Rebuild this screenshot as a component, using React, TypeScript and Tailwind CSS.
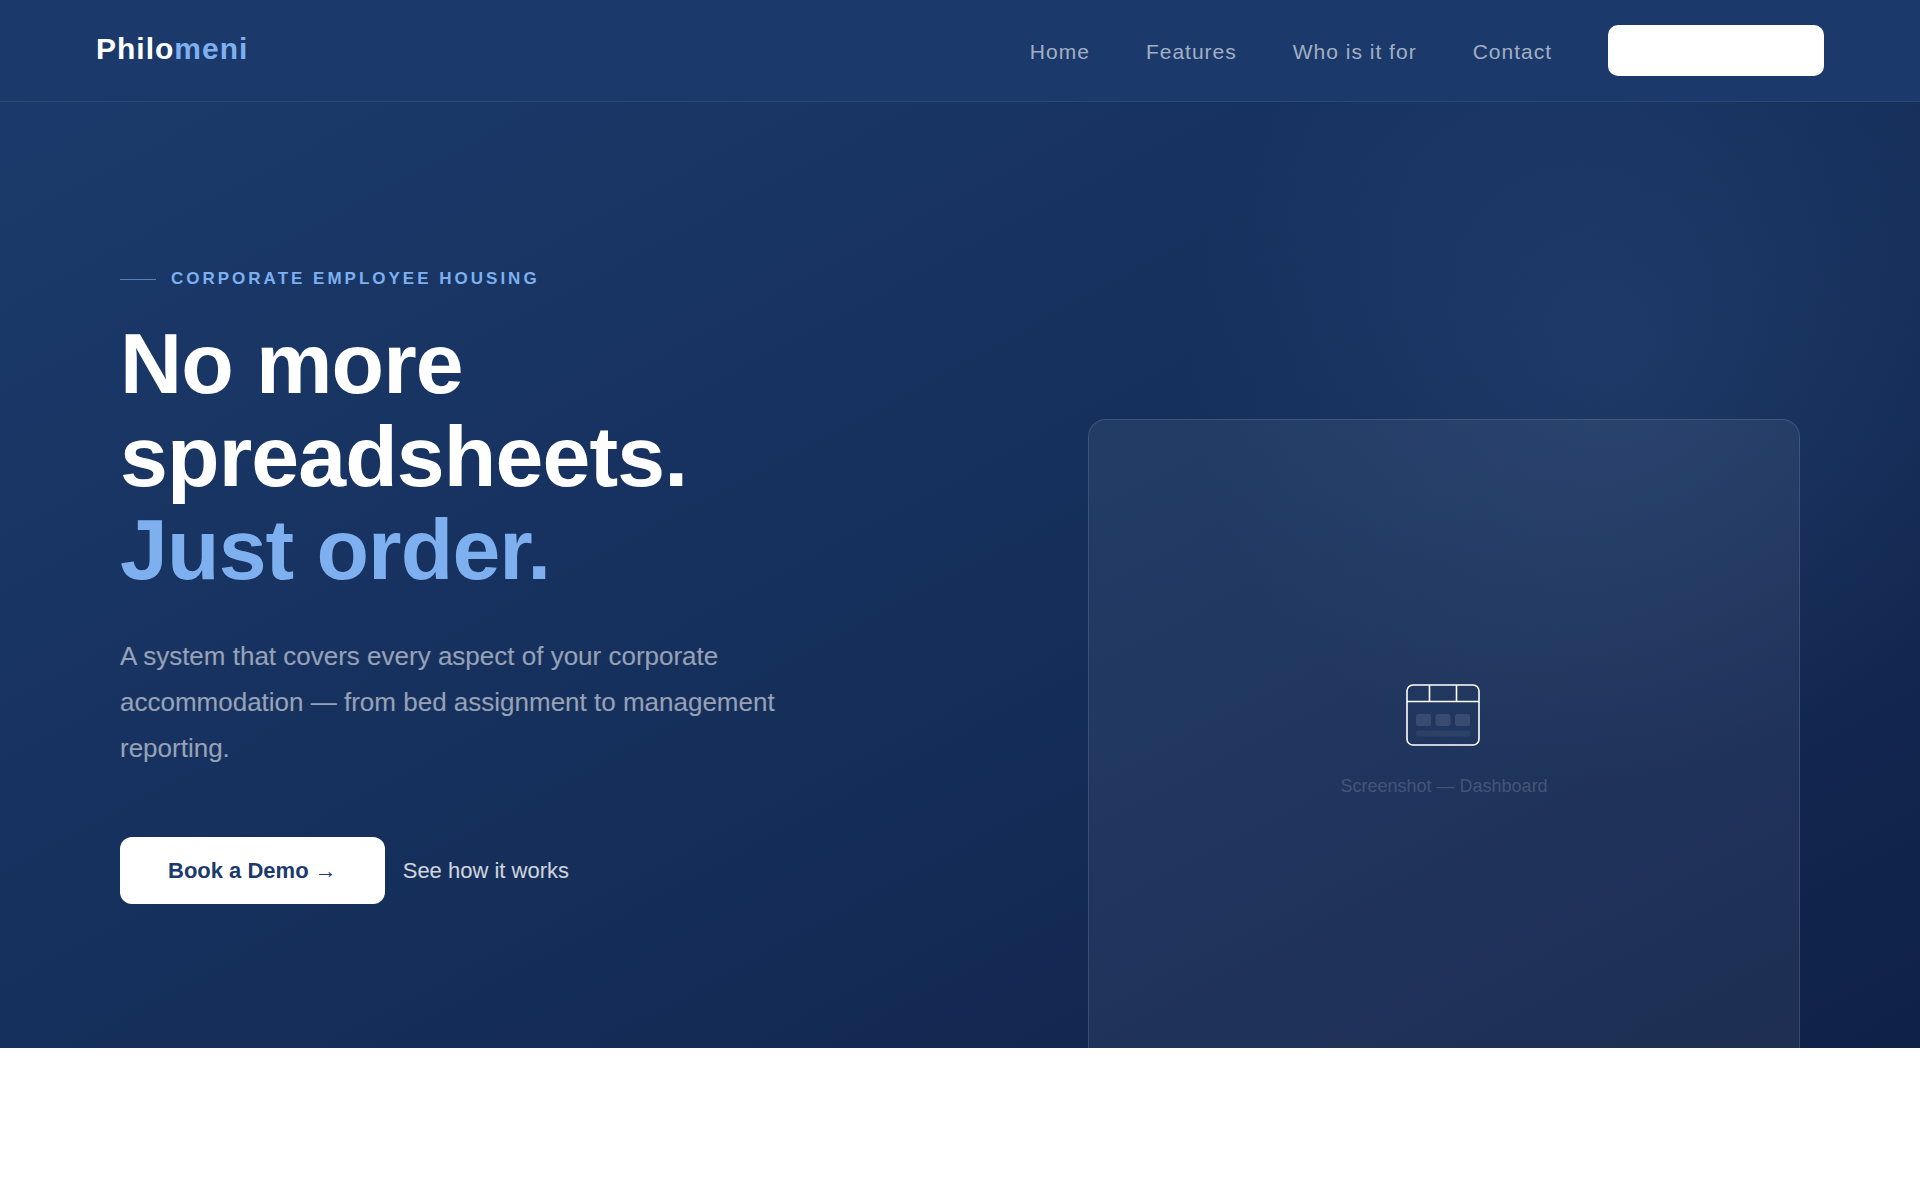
const links = [
  { label: "Home", href: "#home" },
  { label: "Features", href: "#features" },
  { label: "Who is it for", href: "#who" },
  { label: "Contact", href: "#contact" },
];

const Navbar = () => {
  return (
    <header className="flex items-center justify-between border-b border-white/8 bg-[#1b3a6b] px-24 py-[25px]">
      <a href="#home" className="-mt-1 text-[30px] leading-[34px] font-bold tracking-[1px] text-white">
        Philo<span className="text-[#7eb0f0]">meni</span>
      </a>
      <nav className="flex items-center gap-14 text-[21px] tracking-[1px] text-white/60">
        {links.map((link) => (
          <a key={link.label} href={link.href} className="pt-0.5 leading-6 hover:text-white">
            {link.label}
          </a>
        ))}
        <a href="#demo" aria-label="Book a Demo" className="h-[51px] w-[216px] rounded-[10px] bg-white" />
      </nav>
    </header>
  );
};

const DashboardIcon = () => {
  return (
    <svg width="76" height="62" viewBox="0 0 76 62" fill="none" aria-hidden="true">
      <rect x="1" y="1" width="72" height="60" rx="6" stroke="white" strokeWidth="1.6" />
      <path d="M1 17.5H73M23.5 1V17.5M50.5 1V17.5" stroke="white" strokeWidth="1.6" />
      <g fill="white">
        <rect x="10" y="30" width="15" height="12" rx="2.5" opacity="0.11" />
        <rect x="29.5" y="30" width="15" height="12" rx="2.5" opacity="0.11" />
        <rect x="49" y="30" width="15" height="12" rx="2.5" opacity="0.11" />
        <rect x="10" y="46.5" width="54" height="6" rx="2.5" opacity="0.06" />
      </g>
    </svg>
  );
};

const Hero = () => {
  return (
    <section
      id="home"
      className="relative overflow-hidden bg-[linear-gradient(152deg,#1b3a6b_0%,#152e5a_55%,#0f2147_100%)] px-30"
    >
      <div className="pointer-events-none absolute inset-0 bg-[radial-gradient(circle_at_84%_27%,rgba(126,179,245,0.09)_0%,rgba(126,179,245,0)_430px)]" />
      <div className="relative grid grid-cols-[1.2fr_1fr] gap-[114px]">
        <div className="pt-[167px] pb-36">
          <p className="flex items-center gap-[15px] text-[17px] leading-5 font-bold tracking-[3px] text-[#7eb0f0] uppercase">
            <span className="h-px w-9 bg-[#7eb0f0]/60" />
            Corporate Employee Housing
          </p>
          <h1 className="mt-7 text-[86px] leading-[93px] font-bold tracking-[-0.01em] text-white">
            No more
            <br />
            spreadsheets.
            <br />
            <span className="text-[#7eb0f0]">Just order.</span>
          </h1>
          <p className="mt-[37px] max-w-[660px] text-[26px] leading-[46px] text-white/55">
            A system that covers every aspect of your corporate accommodation — from bed assignment to management
            reporting.
          </p>
          <div className="mt-[66px] flex items-center gap-[18px] text-[22px]">
            <a href="#demo" className="rounded-xl bg-white px-12 py-[21px] leading-[25px] font-bold text-[#1b3a6b]">
              Book a Demo →
            </a>
            <a href="#features" className="text-white/80">
              See how it works
            </a>
          </div>
        </div>
        <div className="-mb-3 flex aspect-[10/9] flex-col items-center justify-center gap-[30px] self-end rounded-t-[18px] border border-white/12 bg-white/6">
          <DashboardIcon />
          <p className="text-[18px] leading-5 text-white/18">Screenshot — Dashboard</p>
        </div>
      </div>
    </section>
  );
};

export default function App() {
  return (
    <div className="min-h-screen bg-white font-['Liberation_Sans',Arial,sans-serif]">
      <Navbar />
      <Hero />
    </div>
  );
}
